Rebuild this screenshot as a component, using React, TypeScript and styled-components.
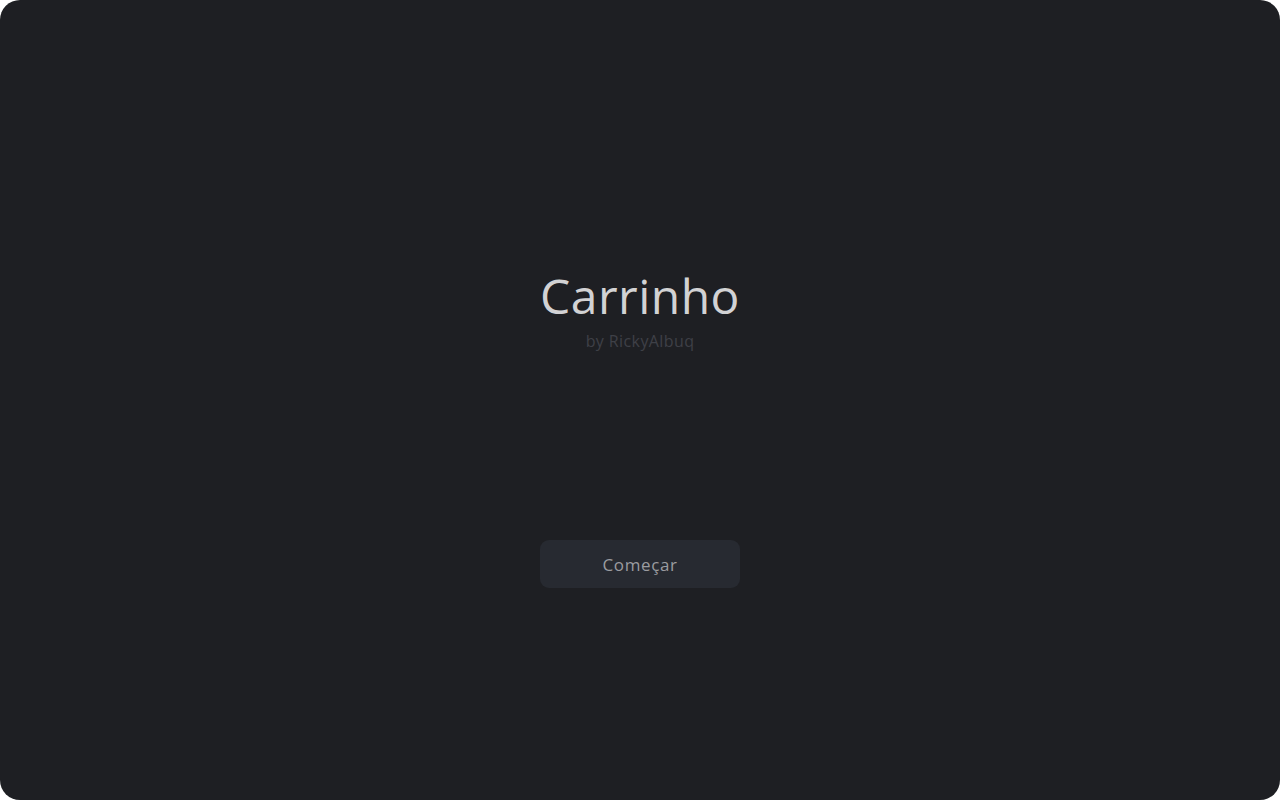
import React from "react";
import styled, { createGlobalStyle } from "styled-components";

const Global = createGlobalStyle`
  html, body { margin: 0; padding: 0; background: #ffffff; }
  * { box-sizing: border-box; }
`;

const Screen = styled.div`
  width: 1280px;
  height: 800px;
  border-radius: 20px;
  background: #1e1f23;
  display: flex;
  flex-direction: column;
  align-items: center;
  padding-top: 267px;
  font-family: "Open Sans", "Noto Sans", sans-serif;
`;

const Title = styled.h1`
  margin: 0;
  font-size: 48px;
  line-height: 58px;
  font-weight: 400;
  color: #d2d2d4;
  letter-spacing: 0.5px;
`;

const Subtitle = styled.p`
  margin: 4px 0 0;
  font-size: 16px;
  line-height: 24px;
  color: #3e4047;
  letter-spacing: 0.4px;
`;

const StartButton = styled.button`
  margin-top: 187px;
  width: 200px;
  height: 48px;
  border: none;
  border-radius: 9px;
  background: #272a31;
  color: #9b9ca0;
  font-family: inherit;
  font-size: 17px;
  letter-spacing: 0.6px;
  cursor: pointer;
`;

export default function App() {
  return (
    <>
      <Global />
      <Screen>
        <Title>Carrinho</Title>
        <Subtitle>by RickyAlbuq</Subtitle>
        <StartButton>Começar</StartButton>
      </Screen>
    </>
  );
}
